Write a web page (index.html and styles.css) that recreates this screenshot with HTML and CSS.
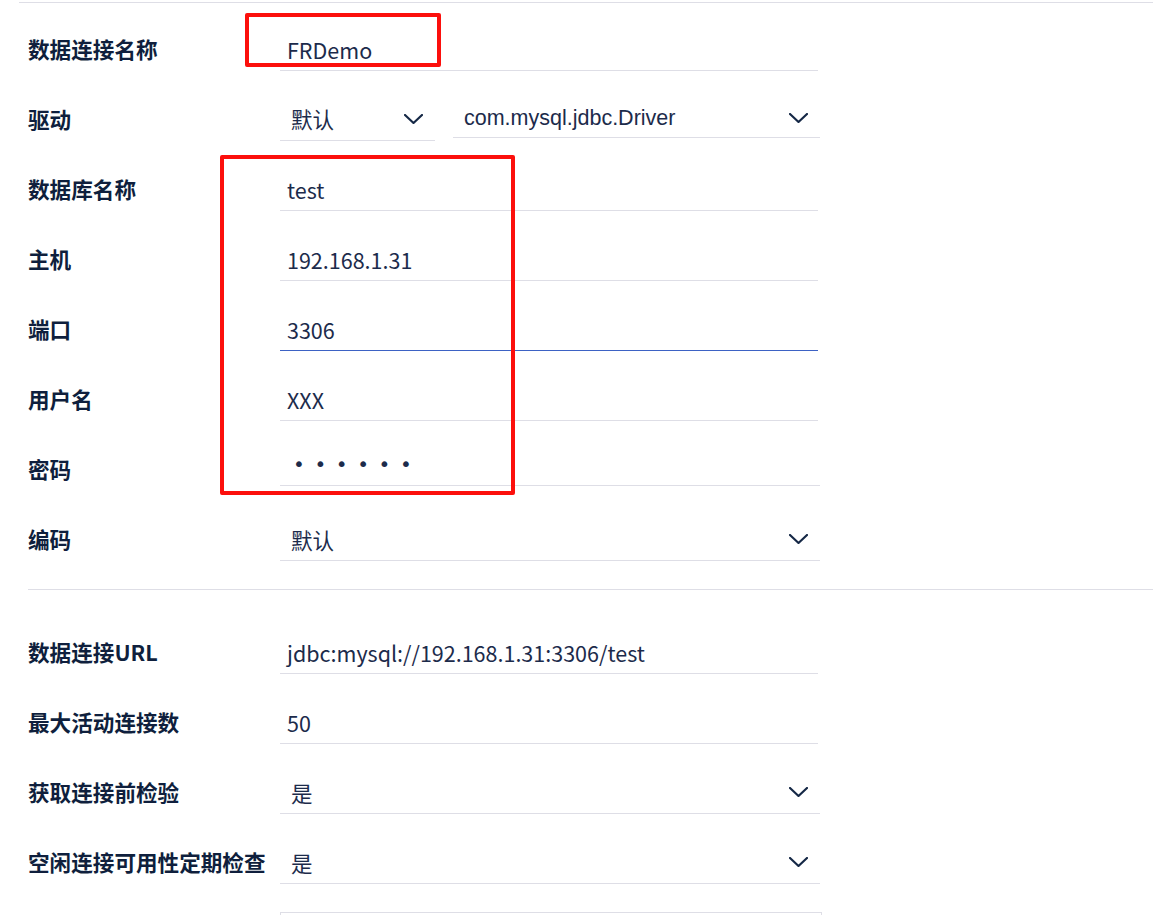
FILE: index.html
```html
<!DOCTYPE html>
<html lang="zh-CN">
<head>
<meta charset="utf-8">
<title>数据连接</title>
<link rel="stylesheet" href="styles.css">
</head>
<body>
<div class="page">
  <section class="section">
    <div class="row">
      <span class="lbl">数据连接名称</span>
      <div class="field input">FRDemo</div>
    </div>
    <div class="row">
      <span class="lbl">驱动</span>
      <div class="group">
        <div class="field select select-small"><span class="up">默认</span><svg class="chev" width="19" height="10" viewBox="0 0 19 10"><path d="M1 1 L9.5 9 L18 1"/></svg></div>
        <div class="field select select-driver"><span class="latin">com.mysql.jdbc.Driver</span><svg class="chev" width="19" height="10" viewBox="0 0 19 10"><path d="M1 1 L9.5 9 L18 1"/></svg></div>
      </div>
    </div>
    <div class="row">
      <span class="lbl">数据库名称</span>
      <div class="field input">test</div>
    </div>
    <div class="row">
      <span class="lbl">主机</span>
      <div class="field input">192.168.1.31</div>
    </div>
    <div class="row">
      <span class="lbl">端口</span>
      <div class="field input focused">3306</div>
    </div>
    <div class="row">
      <span class="lbl">用户名</span>
      <div class="field input">XXX</div>
    </div>
    <div class="row row-pass">
      <span class="lbl lbl-low">密码</span>
      <div class="field input wide"><span class="dots">••••••</span></div>
    </div>
    <div class="row row-enc">
      <span class="lbl">编码</span>
      <div class="field select wide"><span>默认</span><svg class="chev" width="19" height="10" viewBox="0 0 19 10"><path d="M1 1 L9.5 9 L18 1"/></svg></div>
    </div>
  </section>

  <hr class="divider">

  <section class="section second">
    <div class="row">
      <span class="lbl">数据连接URL</span>
      <div class="field input">jdbc:mysql://192.168.1.31:3306/test</div>
    </div>
    <div class="row">
      <span class="lbl">最大活动连接数</span>
      <div class="field input">50</div>
    </div>
    <div class="row">
      <span class="lbl">获取连接前检验</span>
      <div class="field select wide"><span>是</span><svg class="chev" width="19" height="10" viewBox="0 0 19 10"><path d="M1 1 L9.5 9 L18 1"/></svg></div>
    </div>
    <div class="row">
      <span class="lbl">空闲连接可用性定期检查</span>
      <div class="field select wide"><span>是</span><svg class="chev" width="19" height="10" viewBox="0 0 19 10"><path d="M1 1 L9.5 9 L18 1"/></svg></div>
    </div>
    <div class="row row-top">
      <span class="lbl"></span>
      <div class="field area"></div>
    </div>
  </section>
</div>

<div class="mark mark-name"></div>
<div class="mark mark-db"></div>
</body>
</html>
```

FILE: styles.css
```css
* {
  box-sizing: border-box;
}

html, body {
  margin: 0;
  padding: 0;
  background: #ffffff;
}

body {
  position: relative;
  font-family: "Noto Sans CJK SC", "Noto Sans", sans-serif;
  color: #1c2b4b;
  overflow: hidden;
  height: 915px;
}

.page {
  margin: 2px 0 0 19px;
  padding: 27px 0 0 9px;
  border-top: 1px solid #dedee6;
}

.section {
  display: flex;
  flex-direction: column;
  gap: 29px;
}

.second {
  margin-top: 43px;
}

.row {
  display: flex;
  align-items: center;
}

.row-pass {
  margin-top: -5px;
}

.row-enc {
  margin-top: 5px;
}

.row-top {
  align-items: flex-start;
  margin-top: -1px;
}

.lbl {
  width: 252px;
  flex: none;
  font-size: 21.6px;
  font-weight: 700;
  color: #0f1f3d;
  line-height: 30px;
  margin-bottom: 3px;
}

.lbl-low {
  margin-top: 7px;
  margin-bottom: 0;
}

.field {
  height: 41px;
  width: 538px;
  flex: none;
  display: flex;
  align-items: center;
  border-bottom: 1px solid #dedee6;
  font-size: 21.5px;
  color: #1c2b4b;
  padding-bottom: 2px;
}

.input {
  padding-left: 7px;
}

.focused {
  border-bottom-color: #3d62c4;
}

.wide {
  width: 540px;
}

.select {
  justify-content: space-between;
  padding: 0 12px 2px 11px;
}

.up {
  margin-bottom: 2px;
}

.group {
  display: flex;
  align-items: flex-start;
  gap: 18px;
}

.select-small {
  width: 155px;
}

.select-driver {
  width: 367px;
  height: 38px;
  padding-bottom: 0;
}

.latin {
  font-family: "Liberation Sans", Arial, sans-serif;
  font-size: 21.5px;
}

.chev {
  flex: none;
  margin-top: -1px;
}

.chev path {
  fill: none;
  stroke: #152846;
  stroke-width: 2.2;
  stroke-linecap: round;
  stroke-linejoin: round;
}

.dots {
  font-family: "DejaVu Sans", sans-serif;
  font-size: 20px;
  letter-spacing: 9.6px;
  padding-left: 6px;
  color: #1c2b4b;
}

.divider {
  border: 0;
  border-top: 1px solid #dedee6;
  margin: 28px 0 0 0;
  height: 0;
}

.area {
  height: 120px;
  width: 542px;
  border: 1px solid #dedee6;
}

.mark {
  position: absolute;
  border: 4px solid #fc0f0c;
  border-radius: 2px;
}

.mark-name {
  left: 245px;
  top: 13px;
  width: 196px;
  height: 54px;
}

.mark-db {
  left: 220px;
  top: 155px;
  width: 295px;
  height: 340px;
}
```
